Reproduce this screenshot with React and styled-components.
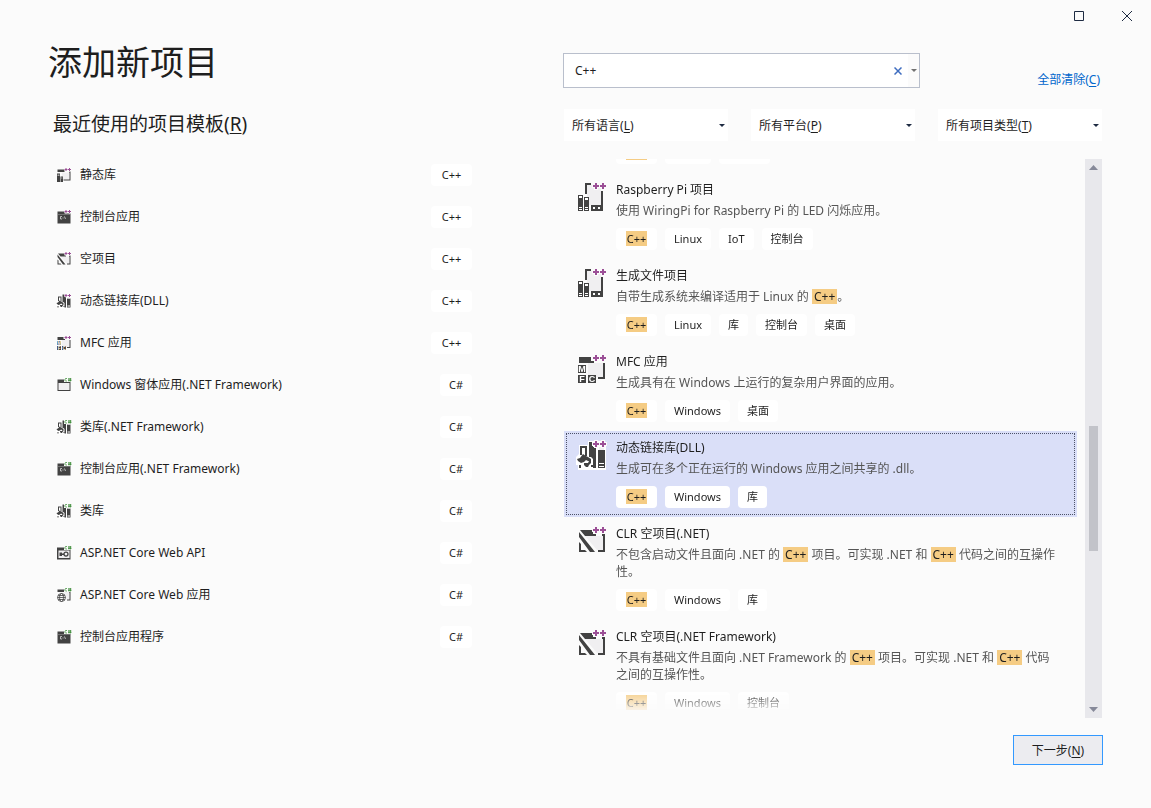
import React from 'react';
import styled, { createGlobalStyle, css } from 'styled-components';

const recentTemplates = [
  { name: '静态库', icon: 'staticLib', lang: 'C++' },
  { name: '控制台应用', icon: 'console', lang: 'C++' },
  { name: '空项目', icon: 'empty', lang: 'C++' },
  { name: '动态链接库(DLL)', icon: 'dll', lang: 'C++' },
  { name: 'MFC 应用', icon: 'mfc', lang: 'C++' },
  { name: 'Windows 窗体应用(.NET Framework)', icon: 'forms', lang: 'C#' },
  { name: '类库(.NET Framework)', icon: 'dll', lang: 'C#' },
  { name: '控制台应用(.NET Framework)', icon: 'console', lang: 'C#' },
  { name: '类库', icon: 'dll', lang: 'C#' },
  { name: 'ASP.NET Core Web API', icon: 'api', lang: 'C#' },
  { name: 'ASP.NET Core Web 应用', icon: 'web', lang: 'C#' },
  { name: '控制台应用程序', icon: 'console', lang: 'C#' },
];

const templates = [
  {
    id: 'linux-console',
    name: '控制台应用',
    icon: 'console',
    description: '在 Linux 终端中运行代码。',
    tags: ['C++', 'Linux', '控制台'],
  },
  {
    id: 'raspberry',
    name: 'Raspberry Pi 项目',
    icon: 'linux',
    description: '使用 WiringPi for Raspberry Pi 的 LED 闪烁应用。',
    tags: ['C++', 'Linux', 'IoT', '控制台'],
  },
  {
    id: 'makefile',
    name: '生成文件项目',
    icon: 'linux',
    description: '自带生成系统来编译适用于 Linux 的 C++。',
    tags: ['C++', 'Linux', '库', '控制台', '桌面'],
  },
  {
    id: 'mfc',
    name: 'MFC 应用',
    icon: 'mfc',
    description: '生成具有在 Windows 上运行的复杂用户界面的应用。',
    tags: ['C++', 'Windows', '桌面'],
  },
  {
    id: 'dll',
    name: '动态链接库(DLL)',
    icon: 'dll',
    description: '生成可在多个正在运行的 Windows 应用之间共享的 .dll。',
    tags: ['C++', 'Windows', '库'],
  },
  {
    id: 'clr-net',
    name: 'CLR 空项目(.NET)',
    icon: 'empty',
    description: '不包含启动文件且面向 .NET 的 C++ 项目。可实现 .NET 和 C++ 代码之间的互操作性。',
    tags: ['C++', 'Windows', '库'],
  },
  {
    id: 'clr-framework',
    name: 'CLR 空项目(.NET Framework)',
    icon: 'empty',
    description: '不具有基础文件且面向 .NET Framework 的 C++ 项目。可实现 .NET 和 C++ 代码之间的互操作性。',
    tags: ['C++', 'Windows', '控制台'],
  },
];

const filters = [
  { id: 'language', label: '所有语言', accessKey: 'L' },
  { id: 'platform', label: '所有平台', accessKey: 'P' },
  { id: 'type', label: '所有项目类型', accessKey: 'T' },
];

// Height of the part of the list that is scrolled away when the dialog opens
const INITIAL_SCROLL = 72;

const DARK = '#424242';
const PALE = '#f0eff1';

const iconShapes = {
  linux: (
    <>
      <path fill={PALE} d="M11 4h14v20H11z" />
      <path fill={DARK} d="M9 2h6v2h-4v9H9zM25 10h2v20H15v-6h10z" />
      <path fill="#fff" d="M17 26h2v2h-2zM22 26h2v2h-2z" />
      <path fill={DARK} d="M2 14h5v16H2zM8 16h5v14H8z" />
      <path fill="#fff" d="M3 15h3v2H3zM9 17h3v2H9zM3 26h3v1H3zM3 28h3v1H3zM9 26h3v1H9zM9 28h3v1H9z" />
    </>
  ),
  mfc: (
    <>
      <path fill={PALE} d="M12 10h15v14H12z" />
      <path fill={DARK} d="M3 4h12v4h3v2H3zM27 10h2v16h-7v-2h5z" />
      <path fill={DARK} d="M2 12h8v8H2zM2 22h8v8H2zM12 22h8v8h-8z" />
      <Letter x="6" y="19">M</Letter>
      <Letter x="6" y="29">F</Letter>
      <Letter x="16" y="29">C</Letter>
    </>
  ),
  dll: (
    <>
      <path fill="#fff" d="M3 6h9V2h17v3h1v26H2v-5H0v-8l3-3z" />
      <path fill={DARK} fillRule="evenodd" d="M4 7h7v10H9V9H6v7H4z" />
      <path fill={DARK} d="M13 3h4v5h3v21h-3v-9l-2-2h-2zM22 11h7v18h-7z" />
      <path fill={PALE} d="M23 8h5v3h-5z" />
      <path fill="#fff" d="M23 24h5v1h-5zM23 27h5v1h-5z" />
      <path fill={DARK} d="M7 15l3 2 2 1 3 2v2h-3l-2-1-2 2-3 1-3-2-1-2 3-1z" />
      <path fill={DARK} d="M8 24h4l1-2h2v2l-2 2-1 2h-2l-2-2zM3 26h2v3H3zM15 26h2v2h-2z" />
    </>
  ),
  empty: (
    <>
      <path fill={PALE} d="M9 11h18v14h-6z" />
      <path fill={DARK} d="M4 5h13v4h3v2H9zM3 7l16 20h-5L3 12zM3 17l2 2v6h4l2 2H3zM26 9h3v18h-7v-2h5V11h-1z" />
    </>
  ),
  staticLib: (
    <>
      <path fill={PALE} d="M12 11h15v14H12z" />
      <path fill={DARK} d="M3 5h14v5H3zM26 9h3v18H15v-2h12V11h-1z" />
      <path fill={DARK} d="M2 13h6v17H2zM9 19h5v11H9z" />
      <path fill="#aaa" d="M3 15h4v3H3zM10 21h3v2h-3z" />
    </>
  ),
  console: (
    <>
      <path fill={DARK} d="M3 5h14v4h12v20H3z" />
      <path fill="#fff" opacity="0.5" d="M4 10h24v1H4z" />
      <path stroke="#e4e4e4" strokeWidth="1.5" fill="none" d="M12 15H9v5h3M14 16v1M14 19v1M17 15l2 5" />
    </>
  ),
  forms: (
    <>
      <path fill={PALE} d="M5 11h22v15H5z" />
      <path fill={DARK} fillRule="evenodd" d="M3 5h14v4h12v19H3zM5 12v14h22V12z" />
    </>
  ),
  api: (
    <>
      <path fill={PALE} d="M5 11h22v16H5z" />
      <path fill={DARK} fillRule="evenodd" d="M2 5h15v4h12v20H2zM5 11v15h22V11z" />
      <circle cx="20" cy="18" r="4" fill="none" stroke={DARK} strokeWidth="2.5" />
      <path fill={DARK} d="M7 15h5v2h4v3h-4v2H7z" />
    </>
  ),
  web: (
    <>
      <path fill={PALE} d="M16 10h11v15H16z" />
      <path fill={DARK} d="M3 5h14v5H3zM26 9h3v18h-7v-2h5V11h-1z" />
      <circle cx="11" cy="21" r="10" fill="#fbfbfb" />
      <g fill="none" stroke={DARK} strokeWidth="1.6">
        <circle cx="11" cy="21" r="8" />
        <ellipse cx="11" cy="21" rx="4" ry="8" />
        <path d="M3 21h16M4.500 17h13M4.500 25h13" />
      </g>
    </>
  ),
};

const plusPlus = 'M19 2h2v2h2v2h-2v2h-2v-2h-2v-2h2zM26 2h2v2h2v2h-2v2h-2v-2h-2v-2h2z';
const sharp = 'M22 3h-3l-1 1v3l1 1h3M24 4h7M24 7h7M26 2v7M29 2v7';

function Letter(props) {
  return <text fill="#fff" fontFamily="Liberation Sans" fontSize="9" fontWeight="700" textAnchor="middle" {...props} />;
}

const TemplateIcon = ({ name, lang = 'C++', size = 32 }) => (
  <Icon viewBox="0 0 32 32" width={size} height={size} aria-hidden="true">
    {iconShapes[name]}
    {lang === 'C++' ? (
      <>
        <path fill="#fbfbfb" stroke="#fbfbfb" strokeWidth="2" d={plusPlus} />
        <path fill="#9b4f96" d={plusPlus} />
      </>
    ) : (
      <>
        <path fill="#fbfbfb" d="M16 0h16v10H16z" />
        <path fill="none" stroke="#388a34" strokeWidth="1.5" d={sharp} />
      </>
    )}
  </Icon>
);

const Highlighted = ({ text }) =>
  text.split(/(C\+\+)/).map((part, i) => (part === 'C++' ? <Mark key={i}>{part}</Mark> : part));

const App = () => {
  const [query, setQuery] = React.useState('C++');
  const [selected, setSelected] = React.useState('dll');
  const listRef = React.useRef(null);

  React.useLayoutEffect(() => {
    listRef.current.scrollTop = INITIAL_SCROLL;
  }, []);

  return (
    <Dialog>
      <GlobalStyle />
      <TitleBar>
        <WindowButton type="button" aria-label="最大化">
          <svg width="10" height="10" viewBox="0 0 10 10">
            <path fill="none" stroke="#1e2b42" d="M.5.5h9v9h-9z" />
          </svg>
        </WindowButton>
        <WindowButton type="button" aria-label="关闭">
          <svg width="10" height="10" viewBox="0 0 10 10">
            <path fill="none" stroke="#1e2b42" d="M0 0l10 10M10 0L0 10" />
          </svg>
        </WindowButton>
      </TitleBar>

      <Content>
        <section>
          <Title>添加新项目</Title>
          <Subtitle>
            最近使用的项目模板(<u>R</u>)
          </Subtitle>
          <RecentList>
            {recentTemplates.map((item) => (
              <li key={item.name}>
                <RecentRow type="button">
                  <TemplateIcon name={item.icon} lang={item.lang} size={16} />
                  <RecentName>{item.name}</RecentName>
                  <Tag $wide={item.lang === 'C++'}>{item.lang}</Tag>
                </RecentRow>
              </li>
            ))}
          </RecentList>
        </section>

        <SearchPanel>
          <SearchRow>
            <SearchBox>
              <SearchInput
                type="text"
                aria-label="搜索模板"
                value={query}
                onChange={(e) => setQuery(e.target.value)}
              />
              <ClearButton type="button" aria-label="清除" onClick={() => setQuery('')}>
                <svg width="8" height="8" viewBox="0 0 8 8">
                  <path fill="none" stroke="#3f6dc0" strokeWidth="1.500" d="M.5.5l7 7M7.500.5l-7 7" />
                </svg>
              </ClearButton>
              <HistoryButton type="button" aria-label="搜索历史">
                <Caret width="6" height="3" viewBox="0 0 6 3" $color="#717171">
                  <path d="M0 0h6L3 3z" />
                </Caret>
              </HistoryButton>
            </SearchBox>
            <ClearLink href="#clear">
              全部清除(<u>C</u>)
            </ClearLink>
          </SearchRow>

          <Filters>
            {filters.map((filter) => (
              <Filter key={filter.id} htmlFor={filter.id}>
                <span>
                  {filter.label}(<u>{filter.accessKey}</u>)
                </span>
                <Caret width="6" height="3" viewBox="0 0 6 3" $color="#1e2b42">
                  <path d="M0 0h6L3 3z" />
                </Caret>
                <FilterSelect id={filter.id}>
                  <option>{filter.label}</option>
                </FilterSelect>
              </Filter>
            ))}
          </Filters>

          <Results>
            <ResultList ref={listRef} role="listbox" aria-label="项目模板">
              {templates.map((item) => (
                <ResultItem
                  key={item.id}
                  role="option"
                  aria-selected={item.id === selected}
                  $selected={item.id === selected}
                  onClick={() => setSelected(item.id)}>
                  <TemplateIcon name={item.icon} />
                  <ResultText>
                    <ResultName>{item.name}</ResultName>
                    <Description>
                      <Highlighted text={item.description} />
                    </Description>
                    <Tags>
                      {item.tags.map((tag) => (
                        <Tag key={tag} $wide={tag === 'C++'}>
                          <Highlighted text={tag} />
                        </Tag>
                      ))}
                    </Tags>
                  </ResultText>
                </ResultItem>
              ))}
            </ResultList>
            <ScrollBar aria-hidden="true">
              <Caret width="9" height="5" viewBox="0 0 9 5" $color="#868999">
                <path d="M0 5h9L4.500 0z" />
              </Caret>
              <ScrollTrack>
                <ScrollThumb />
              </ScrollTrack>
              <Caret width="9" height="5" viewBox="0 0 9 5" $color="#868999">
                <path d="M0 0h9L4.500 5z" />
              </Caret>
            </ScrollBar>
          </Results>

          <Footer>
            <NextButton type="button">
              下一步(<u>N</u>)
            </NextButton>
          </Footer>
        </SearchPanel>
      </Content>
    </Dialog>
  );
};

export default App;

const GlobalStyle = createGlobalStyle`
  * {
    box-sizing: border-box;
  }

  body {
    margin: 0;
    background: #fbfbfb;
  }

  body, button, input, select {
    font-family: "Noto Sans", "Noto Sans CJK SC", sans-serif;
    font-size: 12px;
    color: #1e1e1e;
  }

  u {
    text-underline-offset: 2px;
  }
`;

const Dialog = styled.div`
  display: flex;
  flex-direction: column;
  height: 100vh;
  min-height: 700px;
  background: #fbfbfb;
`;

const TitleBar = styled.header`
  display: flex;
  justify-content: flex-end;
  height: 32px;
`;

const WindowButton = styled.button`
  display: flex;
  align-items: center;
  justify-content: center;
  width: 48px;
  padding: 0;
  border: 0;
  background: transparent;

  &:hover {
    background: #e5e5e5;
  }
`;

const Content = styled.main`
  flex: 1;
  display: grid;
  grid-template-columns: 424px minmax(0, 1fr);
  column-gap: 91px;
  min-height: 0;
  padding: 8px 48px 43px;
`;

const Title = styled.h1`
  margin: 0;
  font-size: 34px;
  font-weight: 400;
  line-height: 44px;
`;

const Subtitle = styled.h2`
  margin: 26px 0 16px;
  padding-left: 5px;
  font-size: 19px;
  font-weight: 400;
  line-height: 28px;
`;

const RecentList = styled.ul`
  margin: 0;
  padding: 0;
  list-style: none;
`;

const RecentRow = styled.button`
  display: flex;
  align-items: center;
  gap: 8px;
  width: 100%;
  height: 42px;
  padding: 0 0 0 8px;
  border: 0;
  background: transparent;
  text-align: left;
`;

const RecentName = styled.span`
  flex: 1;
  line-height: 18px;
`;

const Icon = styled.svg`
  flex: none;
  display: block;
`;

const Mark = styled.mark`
  display: inline-block;
  padding: 0 2px;
  background: #f5cc84;
  color: #1e1e1e;
  line-height: 15px;
`;

const Tag = styled.span`
  display: block;
  min-width: ${(props) => (props.$wide ? '41px' : '0')};
  padding: 0 9px;
  border-radius: 4px;
  background: #fff;
  font-size: 11px;
  line-height: 22px;
  text-align: center;

  ${Mark} {
    padding: 0 1px;
  }
`;

const SearchPanel = styled.section`
  display: flex;
  flex-direction: column;
  min-width: 0;
  min-height: 0;
`;

const SearchRow = styled.div`
  display: flex;
  align-items: flex-end;
  justify-content: space-between;
  margin-top: 13px;
  padding-right: 3px;
`;

const SearchBox = styled.div`
  display: flex;
  align-items: stretch;
  width: 357px;
  height: 35px;
  border: 1px solid #b9bfcc;
  background: #fff;
`;

const SearchInput = styled.input`
  flex: 1;
  min-width: 0;
  padding: 0 11px;
  border: 0;
  outline: 0;
  background: transparent;
`;

const ClearButton = styled.button`
  display: flex;
  align-items: center;
  justify-content: center;
  width: 20px;
  padding: 0;
  border: 0;
  background: transparent;
`;

const HistoryButton = styled(ClearButton)`
  width: 11px;
  background: #fbfbfb;
`;

const Caret = styled.svg`
  flex: none;
  display: block;
  fill: ${(props) => props.$color};
`;

const ClearLink = styled.a`
  color: #0066cc;
  line-height: 16px;
  text-decoration: none;
`;

const Filters = styled.div`
  display: grid;
  grid-template-columns: repeat(3, minmax(0, 1fr));
  column-gap: 23px;
  margin-top: 21px;
  padding: 0 1px;
`;

const Filter = styled.label`
  position: relative;
  display: flex;
  align-items: center;
  justify-content: space-between;
  height: 32px;
  padding: 0 3px 0 8px;
  background: #fff;
`;

const FilterSelect = styled.select`
  position: absolute;
  inset: 0;
  width: 100%;
  opacity: 0;
`;

const Results = styled.div`
  flex: 1;
  display: flex;
  gap: 8px;
  min-height: 0;
  margin-top: 18px;
  padding: 0 1px;
`;

const ResultList = styled.ul`
  flex: 1;
  min-width: 0;
  margin: 0;
  padding: 0;
  overflow-y: auto;
  scrollbar-width: none;
  list-style: none;
  mask-image: linear-gradient(to top, transparent 4px, #000 28px);
`;

const ResultItem = styled.li`
  display: flex;
  gap: 8px;
  padding: 8px 18px 9px 12px;

  ${(props) =>
    props.$selected &&
    css`
      background: #dadff8;
      outline: 1px dotted #4d5268;
      outline-offset: -3px;
    `}
`;

const ResultText = styled.div`
  flex: 1;
  min-width: 0;
`;

const ResultName = styled.div`
  line-height: 17px;
`;

const Description = styled.p`
  margin: 4px 0 9px;
  color: #555;
  line-height: 17px;
`;

const Tags = styled.div`
  display: flex;
  gap: 8px;
`;

const ScrollBar = styled.div`
  display: flex;
  flex-direction: column;
  align-items: center;
  gap: 6px;
  width: 17px;
  padding: 6px 0;
  background: #e8e8ec;
`;

const ScrollTrack = styled.div`
  flex: 1;
  display: grid;
  grid-template-rows: 250fr 125fr 150fr;
`;

const ScrollThumb = styled.div`
  grid-row: 2;
  width: 9px;
  background: #c2c3c9;
`;

const Footer = styled.footer`
  display: flex;
  justify-content: flex-end;
  margin-top: 17px;
`;

const NextButton = styled.button`
  width: 90px;
  height: 30px;
  padding: 0;
  border: 1px solid #3399ff;
  background: #ececf0;
`;
